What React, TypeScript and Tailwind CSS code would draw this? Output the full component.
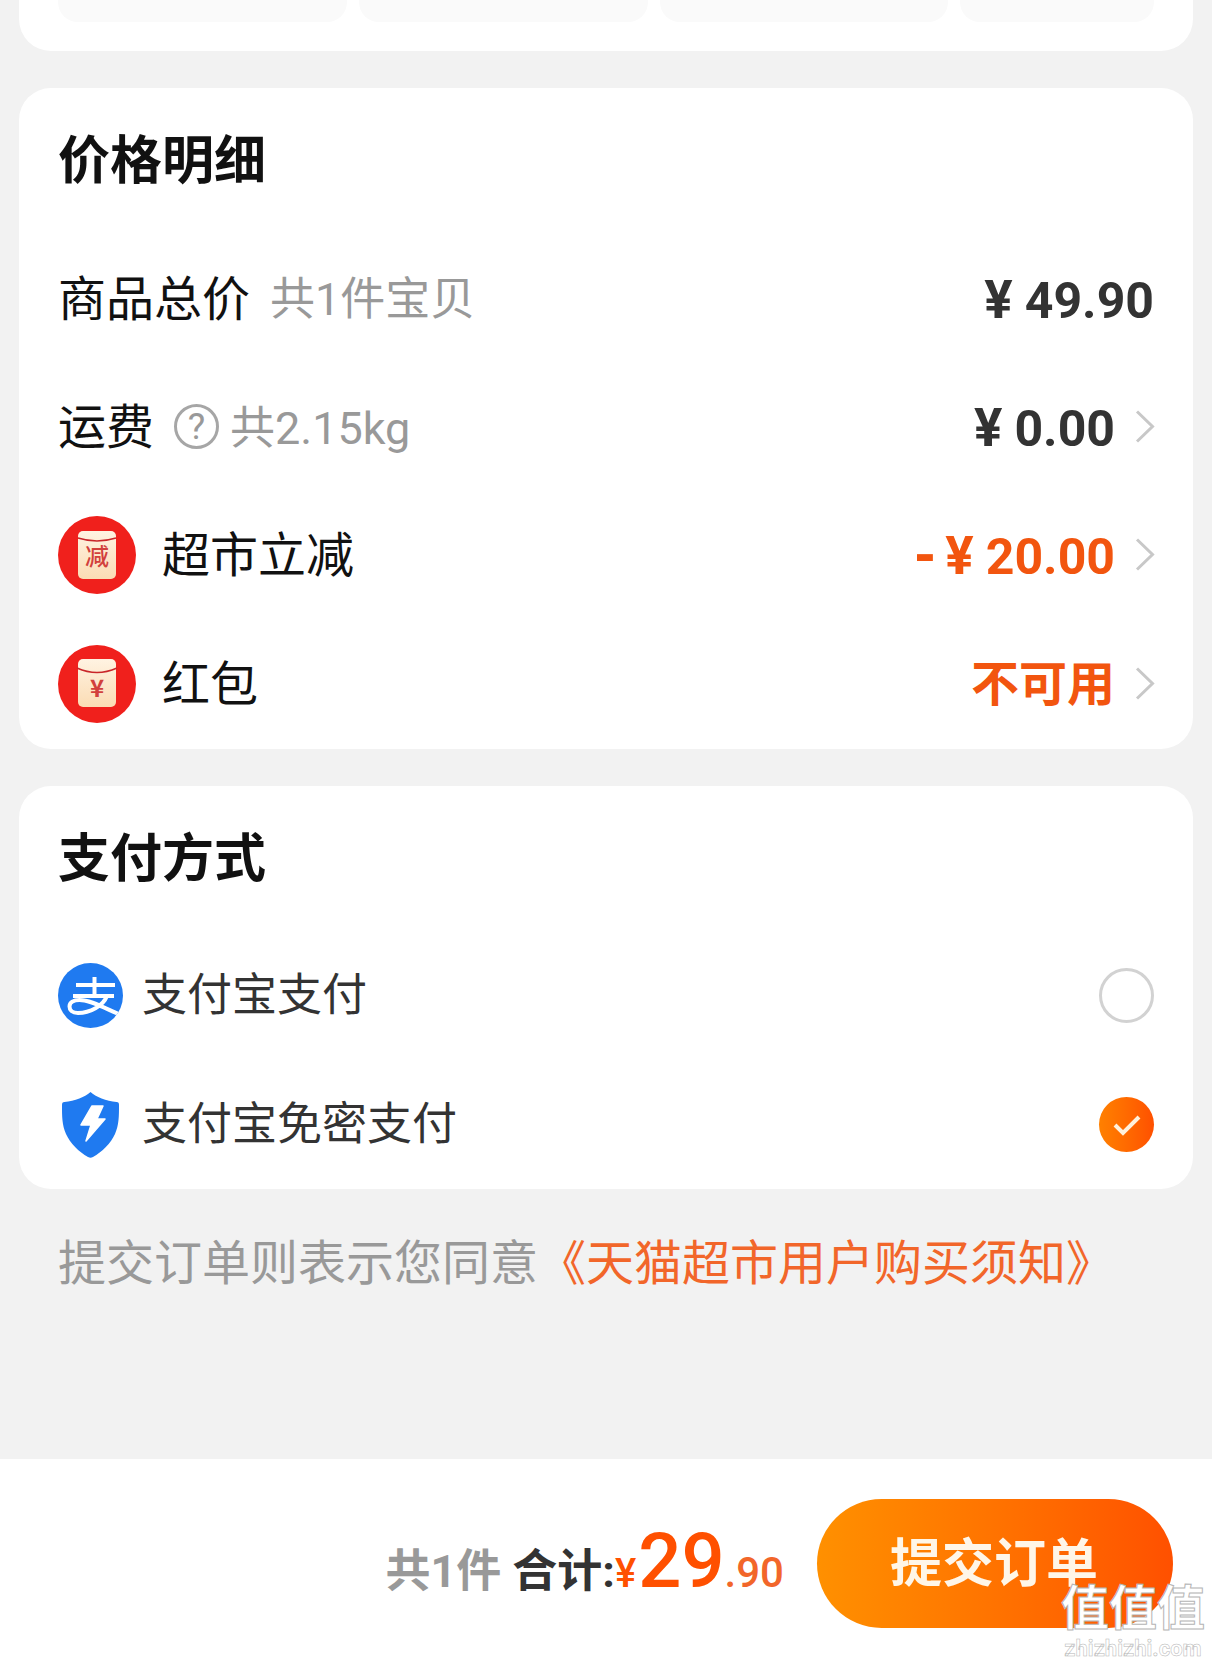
const tabs = ["w-[290px]", "w-[289px]", "w-[289px]", "w-[194px]"];

function RedPacket({ discount = false }: { discount?: boolean }) {
  return (
    <svg width="78" height="78" viewBox="0 0 78 78" className="shrink-0">
      <circle cx="39" cy="39" r="39" fill="#f0201c" />
      <defs>
        <linearGradient id={discount ? "packetA" : "packetB"} x1="0" y1="0" x2="0" y2="1">
          <stop offset="0" stopColor="#fff3e2" />
          <stop offset="1" stopColor="#fbdcb4" />
        </linearGradient>
      </defs>
      <rect
        x="20"
        y={discount ? 15 : 14}
        width="38"
        height="48"
        rx="5"
        fill={`url(#${discount ? "packetA" : "packetB"})`}
      />
      <path
        d={discount ? "M20 22q19 6 38 0" : "M19 23q20 9 40 0"}
        fill="none"
        stroke="#c9262a"
        strokeWidth="1.5"
      />
      <text
        x="39"
        y={discount ? 49 : 52}
        textAnchor="middle"
        fontSize={24}
        fontWeight={discount ? 500 : 700}
        fill="#d2403c"
        fontFamily="'Noto Sans CJK SC', sans-serif"
      >
        {discount ? "减" : "¥"}
      </text>
    </svg>
  );
}

function AlipayIcon() {
  return (
    <svg width="65" height="65" viewBox="0 0 65 65" className="shrink-0">
      <defs>
        <clipPath id="alipayCircle">
          <circle cx="32.5" cy="32.5" r="32.5" />
        </clipPath>
      </defs>
      <circle cx="32.5" cy="32.5" r="32.5" fill="#1f7af0" />
      <g clipPath="url(#alipayCircle)" fill="none" stroke="#fff" strokeWidth="4">
        <path d="M18 22h39M15 33h41M36.500 14v19" />
        <path d="M49 33c-4 10-17 17-29 17-6 0-8.500-3-8.500-6.500 0-4 4-6.500 10-6.500 12 0 26 9 46 17" />
      </g>
    </svg>
  );
}

function ShieldIcon() {
  return (
    <svg width="65" height="68" viewBox="0 0 65 68" className="shrink-0">
      <path
        d="M32.500 1c5 5 16 9 26 10 2 0 2.500 1 2.500 3 0 11 0 20-4 29-4 9-13 18-22 23-2 1-3 1-5 0-9-5-18-14-22-23-4-9-4-18-4-29 0-2 .5-3 2.500-3 10-1 21-5 26-10z"
        fill="#1f7af0"
      />
      <path
        d="M34 15 L45 15 L39 28 L47 28 L28 50 L33 34 L23 34 Z"
        fill="#fff"
        strokeLinejoin="round"
        stroke="#fff"
        strokeWidth="1.500"
      />
    </svg>
  );
}

function Chevron() {
  return (
    <svg width="20" height="33" viewBox="0 0 20 33" fill="none" className="shrink-0">
      <path d="M2 1.500l15.500 15L2 31.500" stroke="#c8c8c8" strokeWidth="3" />
    </svg>
  );
}

function PriceRow({
  left,
  right,
  chevron = true,
  height = "h-[129px]",
}: {
  left: React.ReactNode;
  right: React.ReactNode;
  chevron?: boolean;
  height?: string;
}) {
  return (
    <div className={`flex ${height} items-center justify-between`}>
      <div className="flex items-center">{left}</div>
      <div className="flex items-center gap-[20px]">
        <div className="pt-[3px]">{right}</div>
        {chevron && <Chevron />}
      </div>
    </div>
  );
}

function Amount({ sign, value, orange = false }: { sign?: string; value: string; orange?: boolean }) {
  return (
    <span className={`flex items-baseline font-bold ${orange ? "text-[#f2550f]" : "text-[#333]"}`}>
      {sign && <span className="mr-[8px] text-[54px] leading-none font-black">{sign}</span>}
      <span className="mr-[12px] text-[53px] leading-none">¥</span>
      <span className="text-[50px] leading-none">{value}</span>
    </span>
  );
}

export default function App() {
  return (
    <div className="relative flex h-[1666px] w-[1212px] flex-col overflow-hidden bg-[#f2f2f2] font-['Roboto','Noto_Sans_CJK_SC',sans-serif] text-[#111]">
      <section className="mx-[19px] flex h-[51px] gap-[12px] rounded-b-[32px] bg-white px-[39px]">
        {tabs.map((width, i) => (
          <div key={i} className={`${width} h-[22px] rounded-b-[20px] bg-[#fafafa]`} />
        ))}
      </section>

      <section className="mx-[19px] mt-[37px] h-[661px] rounded-[32px] bg-white pr-[38px] pl-[39px]">
        <h2 className="flex h-[146px] items-center pt-[2px] text-[52px] leading-none font-bold">价格明细</h2>
        <PriceRow
          chevron={false}
          left={
            <>
              <span className="pt-[2px] text-[48px] leading-none">商品总价</span>
              <span className="ml-[20px] pt-[2px] text-[45px] leading-none text-[#999]">共1件宝贝</span>
            </>
          }
          right={
            <span className="mr-[1px] block">
              <Amount value="49.90" />
            </span>
          }
        />
        <PriceRow
          height="h-[127px]"
          left={
            <>
              <span className="pt-[3px] text-[48px] leading-none">运费</span>
              <span className="ml-[20px] flex h-[45px] w-[45px] items-center justify-center rounded-full border-[3px] border-[#a6a6a6] text-[37px] leading-none text-[#999]">
                ?
              </span>
              <span className="ml-[11px] pt-[3px] text-[45px] leading-none text-[#999]">共2.15kg</span>
            </>
          }
          right={<Amount value="0.00" />}
        />
        <PriceRow
          left={
            <>
              <RedPacket discount />
              <span className="ml-[26px] pt-[3px] text-[48px] leading-none">超市立减</span>
            </>
          }
          right={<Amount sign="-" value="20.00" orange />}
        />
        <PriceRow
          left={
            <>
              <RedPacket />
              <span className="ml-[26px] pt-[3px] text-[48px] leading-none">红包</span>
            </>
          }
          right={<span className="block text-[48px] leading-none font-bold text-[#f2550f]">不可用</span>}
        />
      </section>

      <section className="mx-[19px] mt-[37px] h-[403px] rounded-[32px] bg-white px-[39px]">
        <h2 className="flex h-[145px] items-center pt-[3px] text-[52px] leading-none font-bold">支付方式</h2>
        <div className="flex h-[129px] items-center justify-between">
          <div className="flex items-center gap-[19px] text-[45px] leading-none text-[#333]">
            <AlipayIcon />
            支付宝支付
          </div>
          <div className="h-[55px] w-[55px] rounded-full border-[3px] border-[#d2d2d2]" />
        </div>
        <div className="flex h-[129px] items-center justify-between">
          <div className="flex items-center gap-[19px] text-[45px] leading-none text-[#333]">
            <ShieldIcon />
            支付宝免密支付
          </div>
          <div className="flex h-[55px] w-[55px] items-center justify-center rounded-full bg-gradient-to-r from-[#ff8000] to-[#ff5000]">
            <svg width="30" height="24" viewBox="0 0 30 24" fill="none">
              <path d="M3 12l8 8L27 4" stroke="#fff1dc" strokeWidth="4" />
            </svg>
          </div>
        </div>
      </section>

      <p className="mx-[58px] mt-[51px] flex-1 text-[48px] leading-[48px] whitespace-nowrap text-[#999]">
        提交订单则表示您同意<span className="text-[#f2662a]">《天猫超市用户购买须知》</span>
      </p>

      <footer className="flex h-[207px] items-start justify-end bg-white pt-[40px] pr-[39px]">
        <div className="mt-[24px] flex h-[90px] items-baseline pr-[33px]">
          <span className="text-[45px] leading-none font-bold text-[#999]">共1件</span>
          <span className="ml-[11px] text-[45px] leading-none font-bold text-[#333]">合计:</span>
          <span className="text-[40px] leading-none font-medium text-[#ff5000]">¥</span>
          <span className="ml-[2px] text-[76px] leading-none font-medium text-[#ff5000]">29</span>
          <span className="text-[42px] leading-none font-medium text-[#f2662a]">.90</span>
        </div>
        <button className="flex h-[129px] w-[356px] items-center justify-center rounded-full bg-gradient-to-r from-[#ff9000] to-[#ff5000] pt-[2px] pr-[2px] text-[52px] leading-none font-bold text-[#fff6e8]">
          提交订单
        </button>
      </footer>

      <div className="absolute top-[1581px] right-[7px] flex flex-col items-center text-white">
        <span className="text-[48px] leading-[56px] font-bold [-webkit-text-stroke:1px_#b5b5b5]">值值值</span>
        <span className="text-[22px] leading-[24px] font-bold [-webkit-text-stroke:0.5px_#b5b5b5]">zhizhizhi.com</span>
      </div>
    </div>
  );
}
